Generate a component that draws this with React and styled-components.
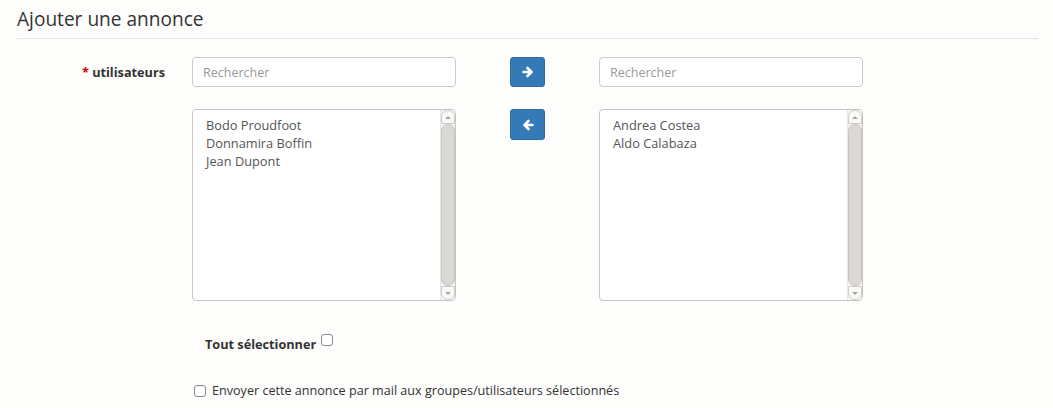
import React from 'react'
import styled, { createGlobalStyle } from 'styled-components'

const leftUsers = ['Bodo Proudfoot', 'Donnamira Boffin', 'Jean Dupont']
const rightUsers = ['Andrea Costea', 'Aldo Calabaza']

function Arrow({ dir }) {
  const d = dir === 'right'
    ? 'M1.5 6h7.5M5.5 2l4 4-4 4'
    : 'M10.5 6H3M6.5 2l-4 4 4 4'
  return (
    <svg width="12" height="12" viewBox="0 0 12 12">
      <path d={d} fill="none" stroke="#fff" strokeWidth="2.6" strokeLinecap="round" strokeLinejoin="round" />
    </svg>
  )
}

function ListBox({ items }) {
  return (
    <Box>
      <Items>
        {items.map(name => <Item key={name}>{name}</Item>)}
      </Items>
      <Scrollbar>
        <ScrollCap>
          <Tri />
        </ScrollCap>
        <Thumb />
        <ScrollCap bottom>
          <Tri down />
        </ScrollCap>
      </Scrollbar>
    </Box>
  )
}

export default function App() {
  return (
    <Page>
      <GlobalStyle />
      <Title>Ajouter une annonce</Title>
      <FormGrid>
        <Label><Star>*</Star> utilisateurs</Label>
        <Search placeholder="Rechercher" />
        <MoveButton><Arrow dir="right" /></MoveButton>
        <Search placeholder="Rechercher" />

        <span />
        <ListBox items={leftUsers} />
        <MoveButton tall><Arrow dir="left" /></MoveButton>
        <ListBox items={rightUsers} />
      </FormGrid>
      <SelectAll>
        Tout sélectionner <Check />
      </SelectAll>
      <MailRow>
        <Check />
        <span>Envoyer cette annonce par mail aux groupes/utilisateurs sélectionnés</span>
      </MailRow>
    </Page>
  )
}

const GlobalStyle = createGlobalStyle`
  body {
    margin: 0;
    background: #fdfdfc;
    font-family: "Open Sans", "DejaVu Sans", sans-serif;
    color: #333;
  }
`

const Page = styled.div`
  padding: 0 15px 0 17px;
  height: 408px;
  box-sizing: border-box;
`

const Title = styled.h1`
  margin: 0;
  padding-top: 8px;
  padding-bottom: 7px;
  font-size: 19.1px;
  font-weight: 400;
  line-height: 23px;
  color: #333;
  border-bottom: 1px solid #e5e5e5;
`

const FormGrid = styled.div`
  display: grid;
  grid-template-columns: 148px 264px 89px 264px;
  grid-template-rows: 30px 192px;
  column-gap: 27px;
  row-gap: 22px;
  margin-top: 18px;
`

const Label = styled.label`
  align-self: center;
  text-align: right;
  font-size: 12.7px;
  font-weight: 700;
  color: #333;
`

const Star = styled.span`
  color: #c00;
`

const Search = styled.input`
  width: 264px;
  height: 30px;
  box-sizing: border-box;
  border: 1px solid #ccc;
  border-radius: 4px;
  background: #fff;
  padding: 0 10px;
  font-family: "Open Sans", sans-serif;
  font-size: 12.5px;
  color: #555;
  &::placeholder { color: #999; }
`

const MoveButton = styled.button`
  justify-self: center;
  width: 35px;
  height: ${p => p.tall ? '31px' : '30px'};
  box-sizing: border-box;
  padding: 0;
  border: 1px solid #2e6da4;
  border-radius: 3px;
  background: #337ab7;
  display: flex;
  align-items: center;
  justify-content: center;
`

const Box = styled.div`
  width: 264px;
  height: 192px;
  box-sizing: border-box;
  border: 1px solid #c6c6c6;
  border-radius: 4px;
  background: #fff;
  display: flex;
  overflow: hidden;
`

const Items = styled.div`
  flex: 1;
  padding: 6px 0 0 13px;
`

const Item = styled.div`
  font-size: 12.8px;
  line-height: 18px;
  color: #555;
`

const Scrollbar = styled.div`
  width: 14px;
  display: flex;
  flex-direction: column;
  background: #f4f2f0;
  border-left: 1px solid #e9e7e5;
`

const ScrollCap = styled.div`
  height: 14px;
  box-sizing: border-box;
  border: 1px solid #cfcbc8;
  border-radius: ${p => p.bottom ? '0 0 7px 7px' : '7px 7px 0 0'};
  background: #fbfaf9;
  display: flex;
  align-items: center;
  justify-content: center;
`

const Tri = styled.div`
  width: 0;
  height: 0;
  border-left: 3px solid transparent;
  border-right: 3px solid transparent;
  ${p => p.down ? 'border-top: 3px solid #a8a4a0;' : 'border-bottom: 3px solid #a8a4a0;'}
`

const Thumb = styled.div`
  flex: 1;
  background: #dcd8d5;
  border: 1px solid #c8c4c1;
  border-radius: 7px;
`

const SelectAll = styled.div`
  margin: 34px 0 0 188px;
  display: flex;
  align-items: center;
  gap: 5px;
  font-size: 12.7px;
  font-weight: 700;
  color: #333;
`

const Check = styled.input.attrs({ type: 'checkbox' })`
  margin: 0;
  width: 12px;
  height: 12px;
  appearance: none;
  border: 1px solid #8a8a8a;
  border-radius: 3px;
  background: #fff;
  position: relative;
  top: -4px;
`

const MailRow = styled.div`
  margin: 29px 0 0 177px;
  display: flex;
  align-items: center;
  gap: 6px;
  font-size: 12.6px;
  color: #333;
  & > input { top: 0; }
`
